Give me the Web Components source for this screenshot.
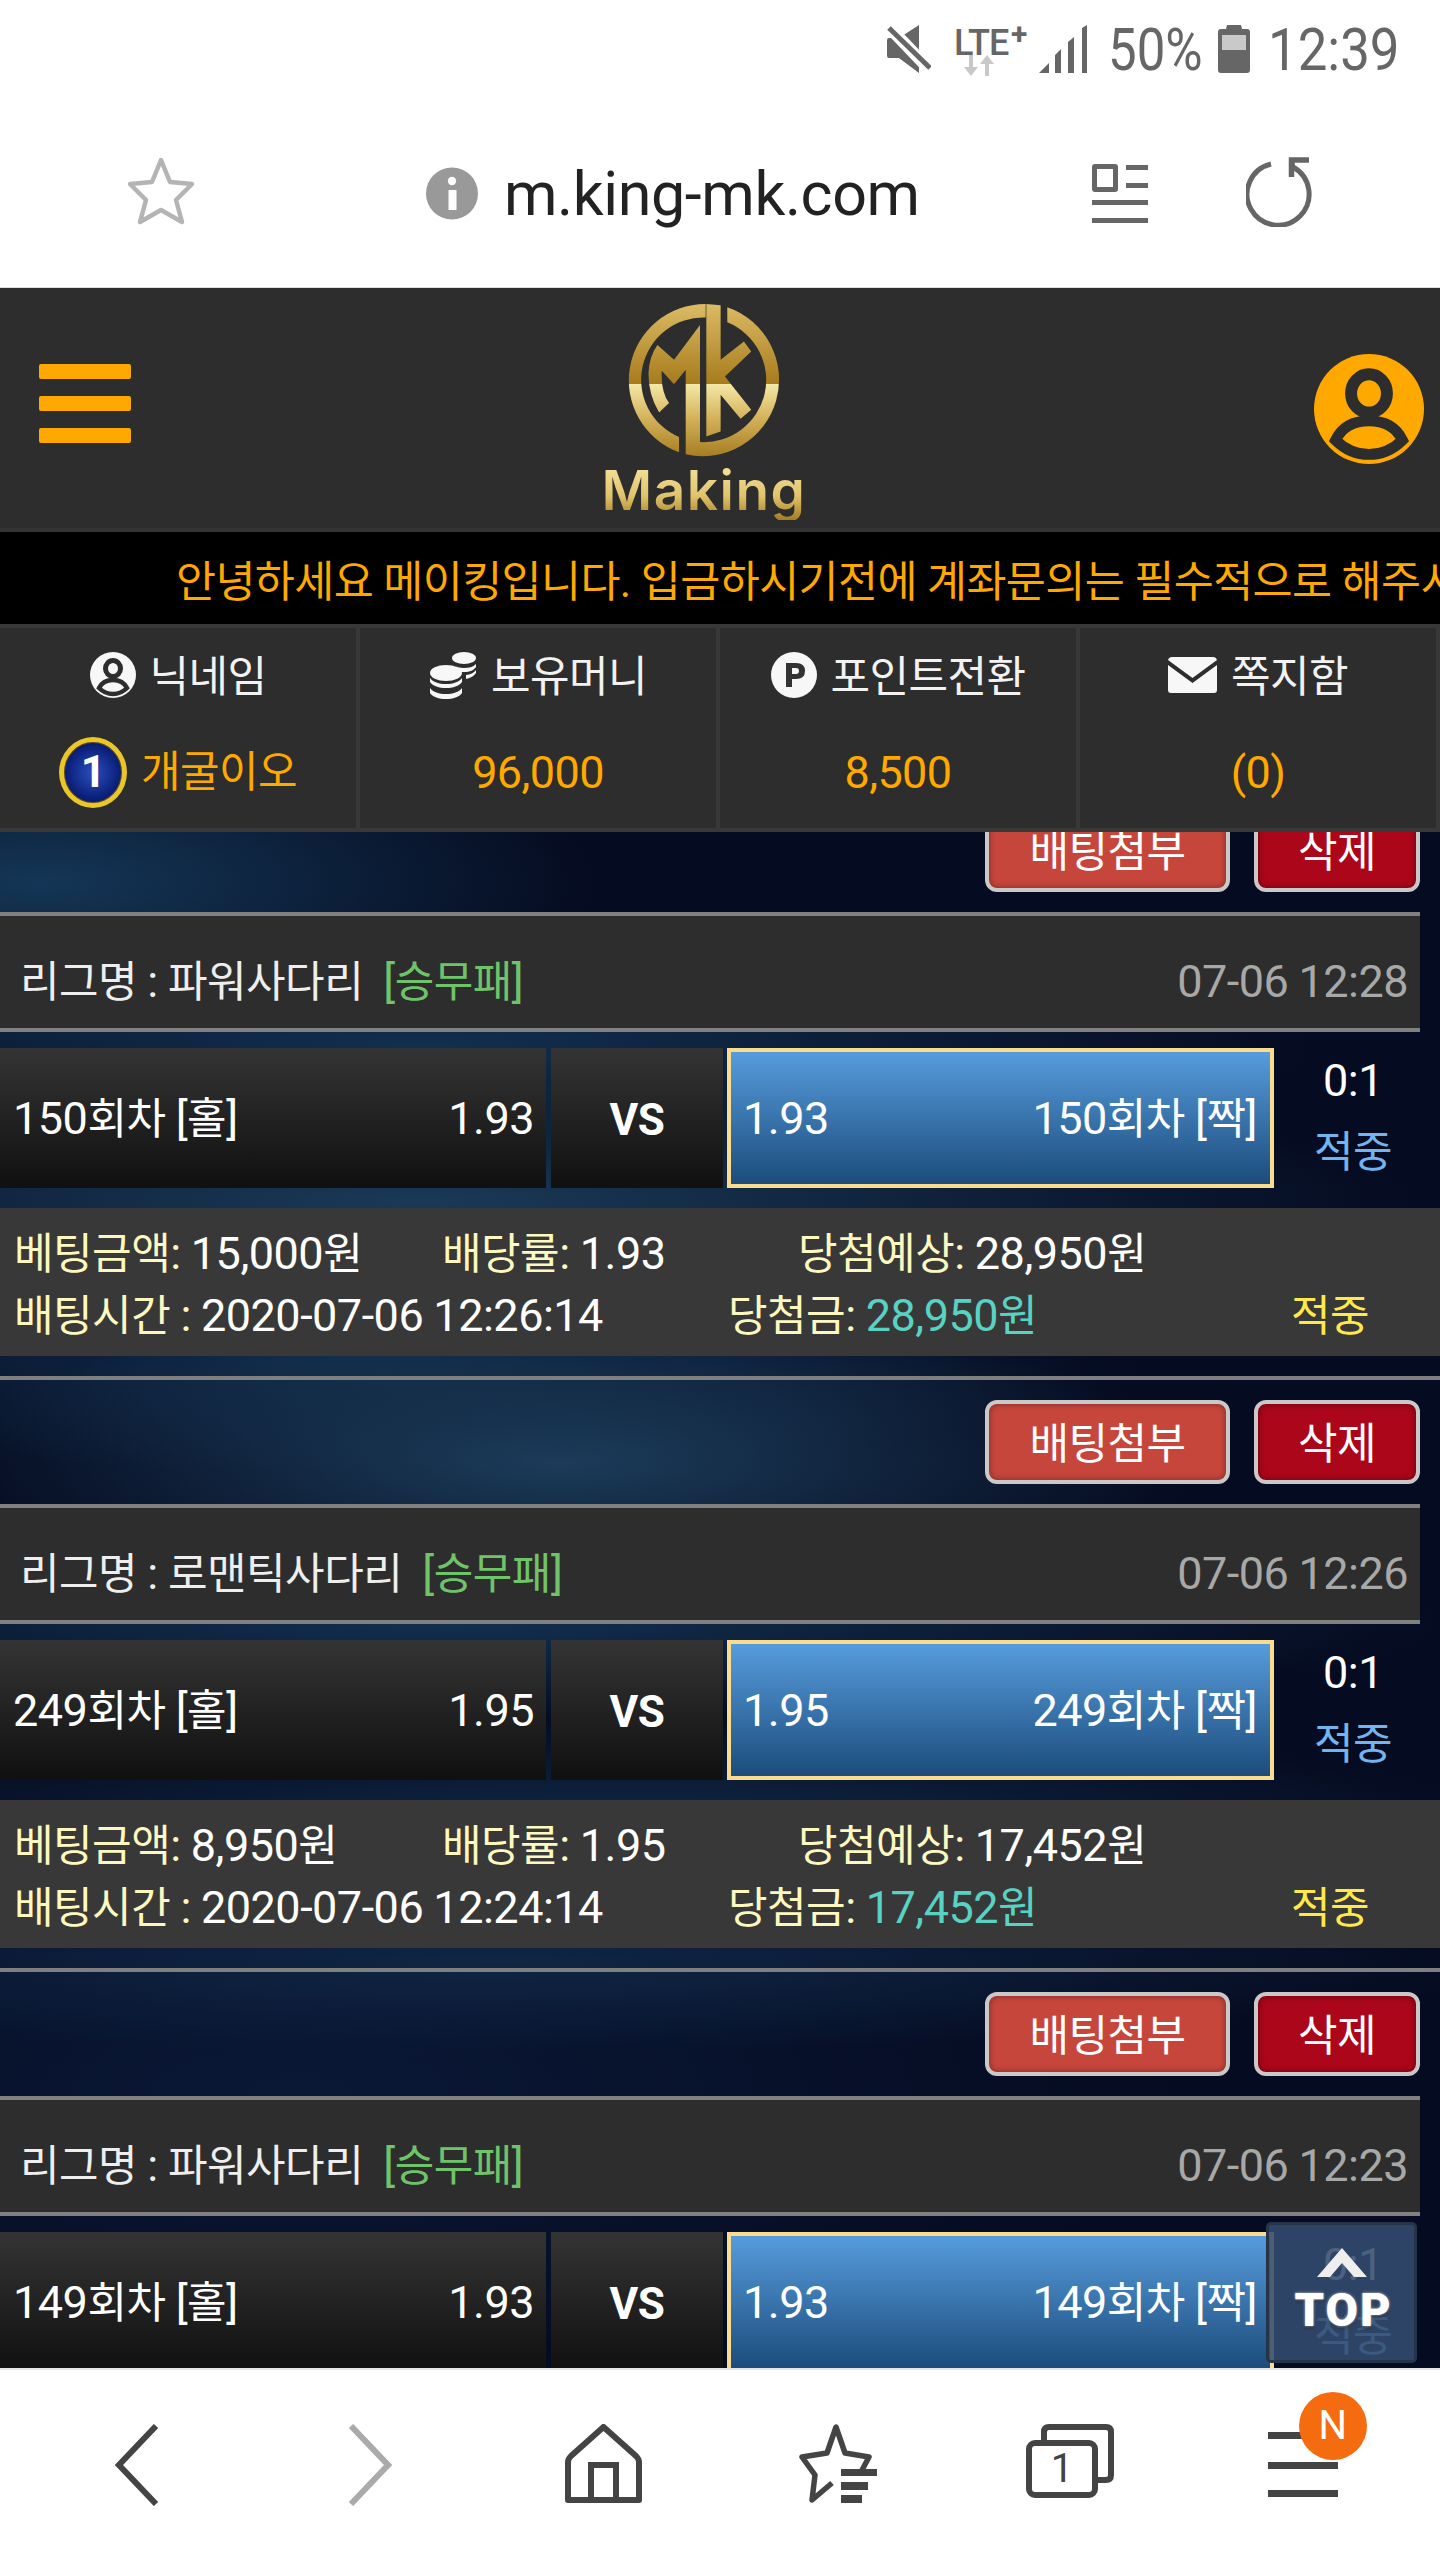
<!DOCTYPE html>
<html lang="ko">
<head>
<meta charset="utf-8">
<title>m.king-mk.com</title>
<style>
  html, body { margin: 0; padding: 0; background: #fff; }
  body { font-family: Roboto, "Noto Sans CJK KR", sans-serif; }
</style>
</head>
<body>
<app-page>
  <status-bar></status-bar>
  <url-bar></url-bar>
  <site-header></site-header>
  <notice-bar>안녕하세요 메이킹입니다. 입금하시기전에 계좌문의는 필수적으로 해주시</notice-bar>
  <stat-strip></stat-strip>
  <bet-list>
    <bet-card league="파워사다리" time="07-06 12:28" round="150" odds="1.93" amount="15,000원" expect="28,950원" placed="2020-07-06 12:26:14" win="28,950원"></bet-card>
    <bet-card league="로맨틱사다리" time="07-06 12:26" round="249" odds="1.95" amount="8,950원" expect="17,452원" placed="2020-07-06 12:24:14" win="17,452원"></bet-card>
    <bet-card league="파워사다리" time="07-06 12:23" round="149" odds="1.93"></bet-card>
  </bet-list>
  <top-button></top-button>
  <bottom-nav></bottom-nav>
</app-page>

<script>
const personIcon = (bg, fg, size) => `
  <svg width="${size}" height="${size}" viewBox="0 0 46 46">
    <circle cx="23" cy="23" r="23" fill="${bg}"/>
    <ellipse cx="23" cy="16.500" rx="7.500" ry="8" fill="${bg}" stroke="${fg}" stroke-width="5"/>
    <path d="M9 36c3-6 8-8 14-8s11 2 14 8q-6 6-14 6T9 36z" fill="${bg}" stroke="${fg}" stroke-width="4.500"/>
  </svg>`;

// digits and brackets sit larger than the hangul in the reference
const num = s => s.replace(/[\d.,:\-\[\]]+/g, m => `<span class="n">${m}</span>`);

class AppPage extends HTMLElement {
  constructor() {
    super();
    this.attachShadow({ mode: 'open' }).innerHTML = `
      <style>
        :host { display: flex; flex-direction: column; position: relative; width: 1440px; height: 2560px; overflow: hidden; background: #fff; }
      </style>
      <slot></slot>`;
  }
}

class StatusBar extends HTMLElement {
  constructor() {
    super();
    this.attachShadow({ mode: 'open' }).innerHTML = `
      <style>
        :host { display: flex; justify-content: flex-end; align-items: flex-start; height: 100px; box-sizing: border-box; padding: 25px 41px 0 0; color: #666; }
        svg { display: block; flex: none; }
        .txt { flex: none; font: 400 60px/50px Roboto, sans-serif; transform-origin: left center; height: 48px; white-space: nowrap; }
        .pct { width: 93px; margin-left: 20px; transform: scaleX(.85); }
        .clock { width: 131px; margin-left: 18px; transform: scaleX(.88); }
        .lte { flex: none; width: 75px; height: 48px; margin-left: 23px; position: relative; font: 500 36px/30px Roboto, sans-serif; }
        .lte b { font-weight: 500; display: block; padding-top: 3px; letter-spacing: -1px; }
        .lte i { position: absolute; left: 57px; top: -5px; font: 700 30px/28px Roboto, sans-serif; }
        .lte svg { position: absolute; left: 10px; top: 30px; }
      </style>
      <svg width="44" height="48" viewBox="0 0 44 48">
        <path d="M0 15q0-2 2-2h10L32 0v48L12 33H2q-2 0-2-2z" fill="#666"/>
        <path d="M0 0 44 46" stroke="#fff" stroke-width="12"/>
        <path d="M2 3 43 43" stroke="#666" stroke-width="5"/>
      </svg>
      <div class="lte"><b>LTE</b><i>+</i>
        <svg width="30" height="22" viewBox="0 0 30 22"><path d="M5 0h4v12h5l-7 9-7-9h5zM21 21V9h-5l7-9 7 9h-5v12z" fill="#c8c8c8"/></svg>
      </div>
      <svg width="49" height="48" viewBox="0 0 49 48" style="margin-left:10px">
        <path d="M0 48 10 38v10zM16 30l6-6v24h-6zM29 17l6-5v36h-6zM43 3l5-3v48h-5z" fill="#666"/>
      </svg>
      <div class="txt pct">50%</div>
      <svg width="32" height="48" viewBox="0 0 32 48" style="margin-left:17px">
        <path d="M9 0h14l1 4h5q3 0 3 3v38q0 3-3 3H3q-3 0-3-3V7q0-3 3-3h5z" fill="#666"/>
        <rect x="4" y="10" width="24" height="15" fill="#c9c9c9"/>
      </svg>
      <div class="txt clock">12:39</div>`;
  }
}

class UrlBar extends HTMLElement {
  constructor() {
    super();
    this.attachShadow({ mode: 'open' }).innerHTML = `
      <style>
        :host { display: flex; align-items: center; height: 188px; box-sizing: border-box; border-bottom: 1px solid #ddd; padding: 0 0 0 126px; }
        svg { display: block; flex: none; }
        .url { font: 400 61px/70px Roboto, sans-serif; color: #222; margin-left: 26px; width: 588px; letter-spacing: -.4px; white-space: nowrap; }
      </style>
      <svg width="70" height="70" viewBox="0 0 70 70" style="margin: -6px 230px 0 0">
        <path d="M35 4 44 26 66 28 50 44 56 66 35 54 14 66 20 44 4 28 26 26z" fill="none" stroke="#b4b4b4" stroke-width="4.500" stroke-linejoin="round"/>
      </svg>
      <svg width="52" height="53" viewBox="0 0 52 53">
        <circle cx="26" cy="26.500" r="26" fill="#999"/>
        <rect x="22.500" y="23" width="8" height="20" fill="#fff"/>
        <circle cx="26" cy="14" r="4.200" fill="#fff"/>
      </svg>
      <div class="url">m.king-mk.com</div>
      <svg width="56" height="60" viewBox="0 0 56 60" style="margin-right:98px">
        <g fill="#666"><path d="M3 0h20q3 0 3 3v22q0 3-3 3H3q-3 0-3-3V3q0-3 3-3zm2 5v18h16V5z" fill-rule="evenodd"/>
        <rect x="34" y="1" width="22" height="5"/><rect x="34" y="19" width="22" height="5"/>
        <rect y="36" width="56" height="5"/><rect y="54" width="56" height="5"/></g>
      </svg>
      <svg width="68" height="70" viewBox="0 0 68 70" style="margin-top:-3px">
        <path d="M25 7A31 31 0 1 0 47 10L45.500 4" fill="none" stroke="#666" stroke-width="5"/>
        <path d="M63 3H45.500V20" fill="none" stroke="#666" stroke-width="5.500"/>
      </svg>`;
  }
}

class SiteHeader extends HTMLElement {
  constructor() {
    super();
    this.attachShadow({ mode: 'open' }).innerHTML = `
      <style>
        :host { display: grid; grid-template-columns: 589px 230px 1fr; height: 244px; box-sizing: border-box; background: #2d2d2d; border-bottom: 4px solid #343434; flex: none; }
        .burger { display: flex; flex-direction: column; gap: 17px; width: 92px; margin: 76px 0 0 39px; }
        .burger i { display: block; height: 15px; border-radius: 2px; background: #ffa800; }
        .logo { padding-top: 7px; }
        .logo svg { display: block; }
        .word { font: 600 55px/60px Inter, Lato, sans-serif; letter-spacing: 1.500px; text-align: center; margin-top: 2px; white-space: nowrap;
          background: linear-gradient(#f1dc93 20%, #e0c36c 60%, #a57c22); -webkit-background-clip: text; background-clip: text; color: transparent; }
        .user { justify-self: end; margin: 66px 16px 0 0; }
      </style>
      <div><div class="burger"><i></i><i></i><i></i></div></div>
      <div class="logo">
        <svg width="230" height="163" viewBox="0 0 690 490">
          <defs>
            <linearGradient id="g" gradientUnits="userSpaceOnUse" x1="0" y1="25" x2="0" y2="485">
              <stop offset="0" stop-color="#dcbc66"/>
              <stop offset=".53" stop-color="#a67b1b"/>
              <stop offset=".53" stop-color="#f4e8a6"/>
              <stop offset=".75" stop-color="#d4b25a"/>
              <stop offset="1" stop-color="#a67d22"/>
            </linearGradient>
          </defs>
          <g fill="url(#g)">
            <path d="M350 27A230 230 0 0 0 270 473V427A187 187 0 0 1 350 68z"/>
            <path d="M415 37A230 230 0 0 1 290 479V225L255 268 218 228Q215 290 240 325L210 353Q178 300 178 235 180 185 205 150L255 195 333 90V442A187 187 0 0 0 415 82z"/>
            <path d="M352 27 395 31V195L465 140 487 170 408 245 487 345 455 372 395 300V410L352 425z"/>
          </g>
        </svg>
        <div class="word">Making</div>
      </div>
      <div class="user">${personIcon('#ffa800', '#2d2d2d', 110)}</div>`;
  }
}

class NoticeBar extends HTMLElement {
  constructor() {
    super();
    this.attachShadow({ mode: 'open' }).innerHTML = `
      <style>
        :host { display: block; flex: none; height: 92px; box-sizing: border-box; background: #000; color: #ffa800; overflow: hidden; white-space: nowrap; padding-left: 176px; font: 400 43.500px/102px Roboto, "Noto Sans CJK KR", sans-serif; letter-spacing: -.6px; }
      </style>
      <slot></slot>`;
  }
}

class StatCell extends HTMLElement {
  constructor() {
    super();
    this.attachShadow({ mode: 'open' }).innerHTML = `
      <style>
        :host { display: flex; flex-direction: column; background: #2d2d2d; font: 400 43px/1 Roboto, "Noto Sans CJK KR", sans-serif; letter-spacing: -.6px; }
        .head, .val { display: flex; align-items: center; justify-content: center; }
        .head { height: 94px; color: #f2f2f2; gap: 14px; }
        .head ::slotted([slot=label]) { padding-top: 4px; }
        .val { height: 106px; color: #ffa800; gap: 14px; font-size: 45px; padding-bottom: 6px; box-sizing: border-box; }
        ::slotted(.name) { font-size: 43px; }
        ::slotted(level-badge) { flex: none; }
      </style>
      <div class="head"><slot name="icon"></slot><slot name="label"></slot></div>
      <div class="val"><slot></slot></div>`;
  }
}

class LevelBadge extends HTMLElement {
  constructor() {
    super();
    this.attachShadow({ mode: 'open' }).innerHTML = `
      <style>
        :host { display: flex; align-items: center; justify-content: center; box-sizing: border-box; width: 68px; height: 71px; border-radius: 50%; border: 5px solid #e9c62a; box-shadow: inset 0 0 0 1px #6b4a10;
          background: radial-gradient(circle at 50% 50%, #2a4fc0, #061a70 70%, #030d45); color: #fff; font: 700 44px/1 Roboto, sans-serif; }
      </style>
      <slot></slot>`;
  }
}

class StatStrip extends HTMLElement {
  constructor() {
    super();
    this.attachShadow({ mode: 'open' }).innerHTML = `
      <style>
        :host { display: grid; grid-template-columns: repeat(4, 356px); gap: 4px; flex: none; padding: 4px 4px 4px 0; background: #383838; height: 208px; box-sizing: border-box; }
        svg { display: block; }
      </style>
      <stat-cell>
        <span slot="icon">${personIcon('#f7f7f7', '#2d2d2d', 46)}</span>
        <span slot="label">닉네임</span>
        <level-badge>1</level-badge><span class="name">개굴이오</span>
      </stat-cell>
      <stat-cell>
        <span slot="icon">
          <svg width="48" height="48" viewBox="0 0 48 48">
            <g fill="#f7f7f7">
              <ellipse cx="35" cy="7" rx="12" ry="6"/>
              <path d="M24 14c3 2 7 3 11 3 5 0 9-1 12-4v3c-2 3-6 5-12 5h-3q-2-4-8-7zM37 24c4-.5 8-2 10-5v3c-2 3-5 5-10 6z"/>
              <ellipse cx="17" cy="22" rx="16" ry="8"/>
              <path d="M1 27c3 4 9 6 16 6s13-2 16-6v4c-3 4-9 6-16 6S4 35 1 31zM1 37c3 4 9 6 16 6s13-2 16-6v5c-3 4-9 6-16 6S4 46 1 42z"/>
            </g>
          </svg>
        </span>
        <span slot="label">보유머니</span>
        <span>96,000</span>
      </stat-cell>
      <stat-cell>
        <span slot="icon">
          <svg width="46" height="46" viewBox="0 0 46 46">
            <circle cx="23" cy="23" r="23" fill="#f7f7f7"/>
            <path d="M15 35V11h10q9 0 9 8t-9 8h-4v8zm6-13h4q3 0 3-3t-3-3h-4z" fill="#333" fill-rule="evenodd"/>
          </svg>
        </span>
        <span slot="label">포인트전환</span>
        <span>8,500</span>
      </stat-cell>
      <stat-cell>
        <span slot="icon">
          <svg width="49" height="36" viewBox="0 0 49 36">
            <path d="M4 0h41q3 0 4 3L24.500 21 0 3q1-3 4-3z" fill="#f7f7f7"/>
            <path d="M0 8l24.500 18L49 8v25q0 3-3 3H3q-3 0-3-3z" fill="#f7f7f7"/>
          </svg>
        </span>
        <span slot="label">쪽지함</span>
        <span>(0)</span>
      </stat-cell>`;
  }
}

class BetList extends HTMLElement {
  constructor() {
    super();
    this.attachShadow({ mode: 'open' }).innerHTML = `
      <style>
        :host { display: block; flex: none; height: 1536px; overflow: hidden;
          background:
            radial-gradient(ellipse 560px 170px at 40px 50px, #143656, transparent),
            radial-gradient(ellipse 900px 120px at 420px 215px, #12304f, transparent),
            radial-gradient(ellipse 1000px 130px at 420px 370px, #1a3a58, transparent),
            radial-gradient(ellipse 640px 150px at 560px 630px, #1c3c5a, transparent),
            radial-gradient(ellipse 800px 110px at 350px 530px, #102a48, transparent),
            radial-gradient(ellipse 1000px 100px at 450px 790px, #12304f, transparent),
            radial-gradient(ellipse 900px 120px at 620px 1000px, #102a48, transparent),
            radial-gradient(ellipse 1000px 90px at 500px 1130px, #0f2644, transparent),
            radial-gradient(ellipse 900px 300px at 300px 1260px, #0a1836, transparent),
            #050b20; }
        .scroll { margin-top: -48px; }
      </style>
      <div class="scroll"><slot></slot></div>`;
  }
}

class BetCard extends HTMLElement {
  connectedCallback() {
    const a = n => this.getAttribute(n);
    const info = a('amount') ? `
      <div class="info">
        <div class="row r1">
          <span><span class="lab">베팅금액${num(':')}</span> ${num(a('amount'))}</span>
          <span><span class="lab">배당률${num(':')}</span> ${num(a('odds'))}</span>
          <span><span class="lab">당첨예상${num(':')}</span> ${num(a('expect'))}</span>
        </div>
        <div class="row r2">
          <span><span class="lab">배팅시간 ${num(':')}</span> ${num(a('placed'))}</span>
          <span><span class="lab">당첨금${num(':')}</span> <span class="teal">${num(a('win'))}</span></span>
          <span class="hit">적중</span>
        </div>
      </div>` : '';
    this.attachShadow({ mode: 'open' }).innerHTML = `
      <style>
        :host { display: block; font: 400 43px/1 Roboto, "Noto Sans CJK KR", sans-serif; letter-spacing: -.5px; color: #fff; }
        .n { font-size: 45px; }
        .tools { display: flex; justify-content: flex-end; gap: 24px; box-sizing: border-box; border-top: 4px solid #7f7f7f; padding: 20px 20px 20px 0; height: 128px; }
        .btn { display: flex; align-items: center; justify-content: center; box-sizing: border-box; height: 84px; padding-top: 4px; border: 4px solid #c9c9c9; border-radius: 12px; box-shadow: inset 0 0 6px rgba(0,0,0,.4); }
        .attach { width: 245px; background: #c6463c; }
        .del { width: 166px; background: #ab0619; }
        .league { display: flex; justify-content: space-between; align-items: center; margin: 0 20px 16px 0; height: 120px; box-sizing: border-box; padding: 18px 12px 0 20px; background: #2d2d2d; border-top: 4px solid #808080; border-bottom: 4px solid #808080; color: #eee; }
        .league em { font-style: normal; color: #6fc46a; margin-left: 20px; }
        .league time { color: #a8a8a8; }
        .match { display: flex; height: 140px; }
        .home, .vs { background: linear-gradient(#343434, #101010); }
        .home { display: flex; justify-content: space-between; align-items: center; box-sizing: border-box; width: 546px; padding: 0 12px 0 13px; }
        .vs { width: 172px; margin-left: 5px; display: flex; align-items: center; justify-content: center; font-weight: 700; font-size: 44px; padding-top: 4px; box-sizing: border-box; }
        .away { display: flex; justify-content: space-between; align-items: center; box-sizing: border-box; width: 547px; margin-left: 4px; padding: 0 13px 0 12px; border: 4px solid #fbdc8e; background: linear-gradient(#569cdc, #1c4c7c); }
        .score { width: 158px; text-align: center; }
        .score div { height: 70px; line-height: 66px; }
        .score .res { color: #74b4ee; line-height: 68px; }
        .info { margin: 20px 0; background: #383838; padding: 15px 0 0 14px; height: 148px; box-sizing: border-box; line-height: 62px; white-space: nowrap; }
        .row { display: grid; height: 62px; }
        .r1 { grid-template-columns: 428px 356px 1fr; }
        .r2 { grid-template-columns: 714px 563px 1fr; }
        .lab { color: #fdf8bf; }
        .teal { color: #58d2c2; }
        .hit { color: #ffe94a; }
      </style>
      <div class="tools"><div class="btn attach">배팅첨부</div><div class="btn del">삭제</div></div>
      <div class="league"><span>리그명 ${num(':')} ${a('league')}<em>${num('[')}승무패${num(']')}</em></span><time>${num(a('time'))}</time></div>
      <div class="match">
        <div class="home"><span>${num(a('round') + '')}회차 ${num('[')}홀${num(']')}</span><span>${num(a('odds'))}</span></div>
        <div class="vs">VS</div>
        <div class="away"><span>${num(a('odds'))}</span><span>${num(a('round') + '')}회차 ${num('[')}짝${num(']')}</span></div>
        <div class="score"><div>${num('0:1')}</div><div class="res">적중</div></div>
      </div>
      ${info}`;
  }
}

class TopButton extends HTMLElement {
  constructor() {
    super();
    this.attachShadow({ mode: 'open' }).innerHTML = `
      <style>
        :host { position: absolute; left: 1266px; top: 2222px; width: 151px; height: 141px; box-sizing: border-box; border: 3px solid #26344a; border-radius: 5px; background: rgba(52,76,112,.88); display: flex; flex-direction: column; align-items: center; color: #fff; }
        svg { display: block; margin-top: 23px; }
        span { font: 900 47px/44px Roboto, sans-serif; letter-spacing: 2px; margin: 10px 0 0 4px; text-shadow: 0 0 3px rgba(255,255,255,.7), 0 2px 3px rgba(0,0,0,.5); }
      </style>
      <svg width="50" height="30" viewBox="0 0 50 30"><path d="M0 29 25 0l25 29H37L25 15 13 29z" fill="#eee"/></svg>
      <span>TOP</span>`;
  }
}

class BottomNav extends HTMLElement {
  constructor() {
    super();
    this.attachShadow({ mode: 'open' }).innerHTML = `
      <style>
        :host { display: grid; grid-template-columns: repeat(6, 1fr); flex: 1; padding: 0 20px; background: #fff; border-top: 2px solid #e5e5e5; box-sizing: border-box; align-items: start; }
        .item { display: flex; justify-content: center; padding-top: 54px; position: relative; }
        svg { display: block; }
        .badge { position: absolute; left: 112px; top: 22px; width: 68px; height: 68px; border-radius: 50%; background: #f56b10; color: #fff; display: flex; align-items: center; justify-content: center; font: 400 40px/1 Roboto, sans-serif; }
        .tab { position: relative; width: 88px; height: 74px; }
        .tab span { position: absolute; left: 0; width: 72px; top: 21px; text-align: center; color: #444; font: 400 40px/48px Roboto, sans-serif; }
        .menu { margin-top: 8px; }
      </style>
      <div class="item"><svg width="44" height="82" viewBox="0 0 44 82"><path d="M41 2 4 41l37 39" fill="none" stroke="#444" stroke-width="6"/></svg></div>
      <div class="item"><svg width="44" height="82" viewBox="0 0 44 82"><path d="M3 2l37 39L3 80" fill="none" stroke="#aaa" stroke-width="6"/></svg></div>
      <div class="item"><svg width="77" height="80" viewBox="0 0 77 80">
        <path d="M38.500 3 71 32q3 3 3 6v38H3V38q0-3 3-6z" fill="none" stroke="#444" stroke-width="6" stroke-linejoin="round"/>
        <path d="M26 76V41h25v35" fill="none" stroke="#444" stroke-width="6"/>
      </svg></div>
      <div class="item"><svg width="80" height="80" viewBox="0 0 80 80">
        <path d="M64 48l8-15-24-4L39 3 30 29 5 33l13 18-3 25 20-17" fill="none" stroke="#444" stroke-width="5.500" stroke-linejoin="round"/>
        <g fill="#444"><rect x="44" y="45" width="36" height="7"/><rect x="44" y="58" width="27" height="8"/><rect x="44" y="71" width="21" height="8"/></g>
      </svg></div>
      <div class="item"><div class="tab">
        <svg width="88" height="74" viewBox="0 0 88 74">
          <path d="M18 16V8q0-5 5-5h57q5 0 5 5v43q0 5-5 5h-8" fill="none" stroke="#444" stroke-width="6"/>
          <rect x="3" y="19" width="66" height="52" rx="6" fill="none" stroke="#444" stroke-width="6"/>
        </svg>
        <span>1</span>
      </div></div>
      <div class="item">
        <svg class="menu" width="70" height="65" viewBox="0 0 70 65"><g fill="#444"><rect width="70" height="7"/><rect y="30" width="70" height="7"/><rect y="58" width="70" height="7"/></g></svg>
        <div class="badge">N</div>
      </div>`;
  }
}

customElements.define('app-page', AppPage);
customElements.define('status-bar', StatusBar);
customElements.define('url-bar', UrlBar);
customElements.define('site-header', SiteHeader);
customElements.define('notice-bar', NoticeBar);
customElements.define('stat-cell', StatCell);
customElements.define('level-badge', LevelBadge);
customElements.define('stat-strip', StatStrip);
customElements.define('bet-list', BetList);
customElements.define('bet-card', BetCard);
customElements.define('top-button', TopButton);
customElements.define('bottom-nav', BottomNav);
</script>
</body>
</html>
